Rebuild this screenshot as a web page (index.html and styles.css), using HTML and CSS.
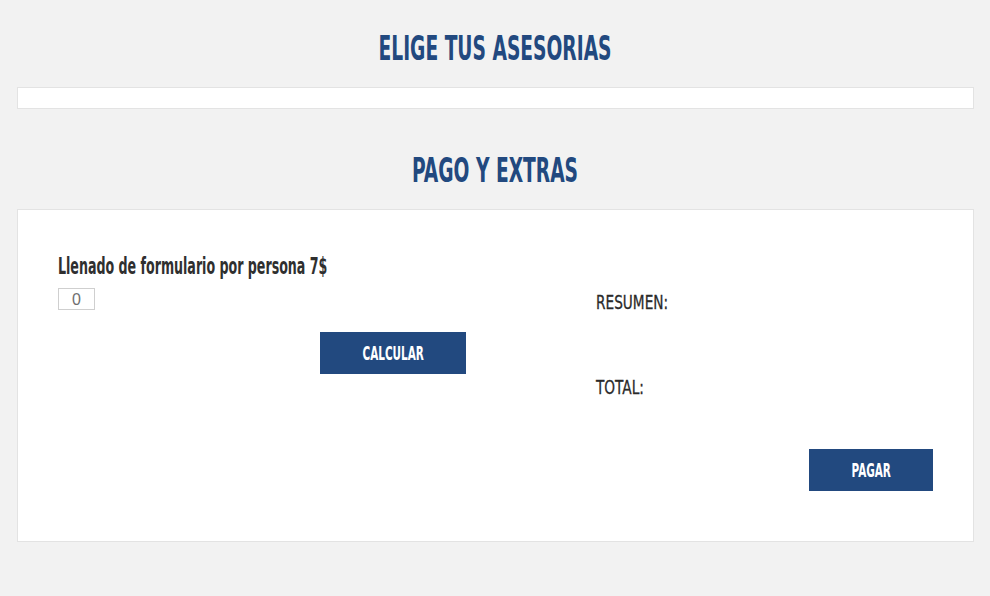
FILE: index.html
```html
<!DOCTYPE html>
<html lang="es">
<head>
<meta charset="utf-8">
<title>Asesorias</title>
<link rel="stylesheet" href="styles.css">
</head>
<body>
<div class="page">
  <h2 class="title title-first"><span class="cond">ELIGE TUS ASESORIAS</span></h2>
  <div class="box box-empty"></div>

  <h2 class="title title-second"><span class="cond">PAGO Y EXTRAS</span></h2>
  <div class="box box-pay">
    <div class="cols">
      <div class="col-left">
        <p class="label"><span class="cond cond-left">Llenado de formulario por persona 7$</span></p>
        <input class="qty" type="text" value="0">
        <div class="calc-row">
          <button class="btn btn-calc"><span class="cond">CALCULAR</span></button>
        </div>
      </div>
      <div class="col-right">
        <p class="sum"><span class="cond-reg">RESUMEN:</span></p>
        <p class="sum total"><span class="cond-reg">TOTAL:</span></p>
      </div>
    </div>
    <div class="pay-row">
      <button class="btn btn-pay"><span class="cond">PAGAR</span></button>
    </div>
  </div>
</div>
</body>
</html>
```

FILE: styles.css
```css
html, body {
  margin: 0;
  padding: 0;
  background: #f2f2f2;
}

body {
  font-family: "DejaVu Sans Condensed", "DejaVu Sans", sans-serif;
  color: #333;
}

.page {
  padding: 0 16px 0 17px;
}

.cond {
  display: inline-block;
  white-space: nowrap;
  transform: scaleX(0.61);
  transform-origin: center;
}

.cond-left {
  transform-origin: left center;
}

.cond-reg {
  display: inline-block;
  white-space: nowrap;
  transform: scaleX(0.76);
  transform-origin: left center;
}

.title {
  margin: 0;
  text-align: center;
  color: #22497f;
  font-weight: 700;
  font-size: 34px;
  line-height: 44px;
  height: 44px;
}

.title-first {
  padding-top: 26px;
}

.title-second {
  padding-top: 39px;
}

.box {
  background: #fff;
  border: 1px solid #e3e3e3;
  margin-top: 17px;
}

.box-empty {
  height: 20px;
}

.box-pay {
  box-sizing: border-box;
  height: 333px;
  padding: 0 40px;
}

.cols {
  display: grid;
  grid-template-columns: 538px 1fr;
}

.label {
  margin: 42px 0 0;
  font-size: 23px;
  font-weight: 700;
  line-height: 28px;
  color: #2f2f2f;
}

.qty {
  display: block;
  margin-top: 8px;
  width: 37px;
  height: 22px;
  box-sizing: border-box;
  border: 1px solid #cfcfcf;
  padding: 2px 0 0;
  text-align: center;
  font-family: "Liberation Sans", sans-serif;
  font-size: 16px;
  font-weight: 400;
  color: #6f6f6f;
  background: #fff;
}

.calc-row {
  margin-top: 22px;
  padding-left: 262px;
}

.btn {
  display: block;
  border: 0;
  background: #22497f;
  color: #fff;
  font-family: inherit;
  font-weight: 700;
  font-size: 19px;
  height: 42px;
  padding: 0;
}

.btn-calc {
  width: 146px;
}

.col-right {
  padding-top: 80px;
}

.sum {
  margin: 0;
  font-size: 20px;
  line-height: 24px;
  color: #2a2a2a;
  -webkit-text-stroke: 0.3px #2a2a2a;
}

.total {
  margin-top: 61px;
}

.pay-row {
  display: flex;
  justify-content: flex-end;
  margin-top: 50px;
}

.btn-pay {
  width: 124px;
}
```
